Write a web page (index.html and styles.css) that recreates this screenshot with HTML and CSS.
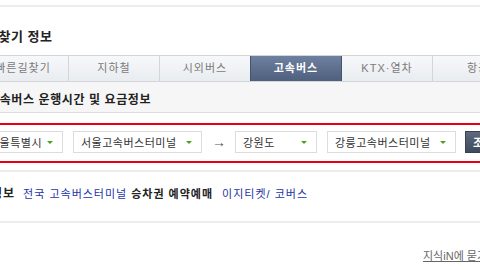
FILE: index.html
```html
<!DOCTYPE html>
<html lang="ko">
<head>
    <meta charset="UTF-8">
    <meta name="viewport" content="width=device-width, initial-scale=1.0">
    <title>고속버스 운행시간</title>
    <link rel="stylesheet" href="styles.css">
</head>
<body>
    <div class="topline"></div>
    <div class="page">
        <h2 class="title">길찾기 정보</h2>

        <ul class="tabs">
            <li class="tab">빠른길찾기</li>
            <li class="tab">지하철</li>
            <li class="tab">시외버스</li>
            <li class="tab on">고속버스</li>
            <li class="tab">KTX·열차</li>
            <li class="tab">항공</li>
        </ul>

        <div class="subhead">고속버스 운행시간 및 요금정보</div>

        <div class="search">
            <div class="sel w-s"><span>서울특별시</span><i class="arrow"></i></div>
            <div class="sel w-l"><span>서울고속버스터미널</span><i class="arrow"></i></div>
            <div class="to">→</div>
            <div class="sel w-s"><span>강원도</span><i class="arrow"></i></div>
            <div class="sel w-l gap-s"><span>강릉고속버스터미널</span><i class="arrow"></i></div>
            <button class="btn">조회</button>
        </div>

        <div class="links">
            <b class="lbl">정보</b>
            <a href="#" class="lnk">전국 고속버스터미널</a>
            <b class="strong">승차권</b>
            <b class="strong">예약예매</b>
            <span class="pair"><a href="#" class="lnk">이지티켓</a>/ <a href="#" class="lnk">코버스</a></span>
        </div>

        <div class="foot">
            <a href="#" class="kin">지식iN에 묻기</a>
        </div>
    </div>
</body>
</html>
```

FILE: styles.css
```css
*{
    box-sizing: border-box;
}
body{
    margin: 0;
    font-family: "Liberation Sans", "Noto Sans CJK KR", sans-serif;
    font-size: 11px;
    color: #333;
    background: #fff;
    overflow: hidden;
}
.topline{
    height: 7px;
    border-bottom: 2px solid #ececec;
}
.page{
    margin-left: -22px;
    width: 580px;
}
.title{
    margin: 0;
    padding: 21px 0 0 8px;
    height: 48px;
    font-size: 13px;
    line-height: 18px;
    letter-spacing: 0.5px;
    color: #222;
}
.tabs{
    display: flex;
    margin: 0;
    padding: 0;
    list-style: none;
    border-top: 1px solid #d2d5da;
    border-bottom: 1px solid #d2d5da;
}
.tab{
    width: 91px;
    height: 25px;
    line-height: 25px;
    text-align: center;
    letter-spacing: 1px;
    color: #7a7a7a;
    background: linear-gradient(#f7f8fa, #e9ecf0);
    border-right: 1px solid #d2d5da;
    flex-shrink: 0;
}
.tab.on{
    width: 92px;
    color: #fff;
    font-weight: bold;
    background: linear-gradient(#6e80a0, #4f607d);
    border-right-color: #45536b;
    border-left: 1px solid #45536b;
    margin-left: -1px;
}
.subhead{
    height: 31px;
    padding: 8px 0 0 10px;
    background: #f6f6f6;
    border-bottom: 1px solid #dcdcdc;
    font-weight: bold;
    font-size: 12px;
    letter-spacing: 0.6px;
    color: #222;
}
.search{
    display: flex;
    margin-top: 10px;
    height: 40px;
    padding: 6px 0 0 1px;
    border: 2px solid #e60012;
    border-right: 0;
}
.sel{
    display: flex;
    align-items: center;
    justify-content: space-between;
    height: 22px;
    padding: 0 9px 0 7px;
    background: #fff;
    border: 1px solid #dcdcdc;
    color: #333;
    font-size: 11px;
    letter-spacing: 0.5px;
    margin-right: 10px;
}
.w-s{
    width: 82px;
}
.w-l{
    width: 129px;
}
.sel.gap-s{
    margin-right: 9px;
}
.arrow{
    width: 0;
    height: 0;
    border-left: 3px solid transparent;
    border-right: 3px solid transparent;
    border-top: 3px solid #4e9d1b;
}
.to{
    width: 23px;
    line-height: 22px;
    font-size: 14px;
    color: #555;
}
.btn{
    height: 22px;
    width: 40px;
    padding: 0 0 0 7px;
    text-align: left;
    border: 1px solid #38424f;
    background: linear-gradient(#5d6a7c, #3f4b5c);
    color: #fff;
    font-family: inherit;
    font-size: 11px;
    font-weight: bold;
}
.links{
    display: flex;
    align-items: center;
    margin-top: 7px;
    height: 53px;
    padding: 0 0 8px 13px;
    border-top: 2px solid #ececec;
    border-bottom: 2px solid #ececec;
    font-size: 11px;
    letter-spacing: 1px;
}
.lbl{
    font-size: 12px;
    color: #222;
    margin-right: 8px;
}
.lnk{
    color: #2233a8;
    text-decoration: none;
}
.strong{
    color: #222;
    margin-left: 4px;
}
.pair{
    margin-left: 9px;
    color: #2233a8;
}
.foot{
    padding: 24px 0 0 445px;
}
.kin{
    color: #666;
    font-size: 11px;
}
```
